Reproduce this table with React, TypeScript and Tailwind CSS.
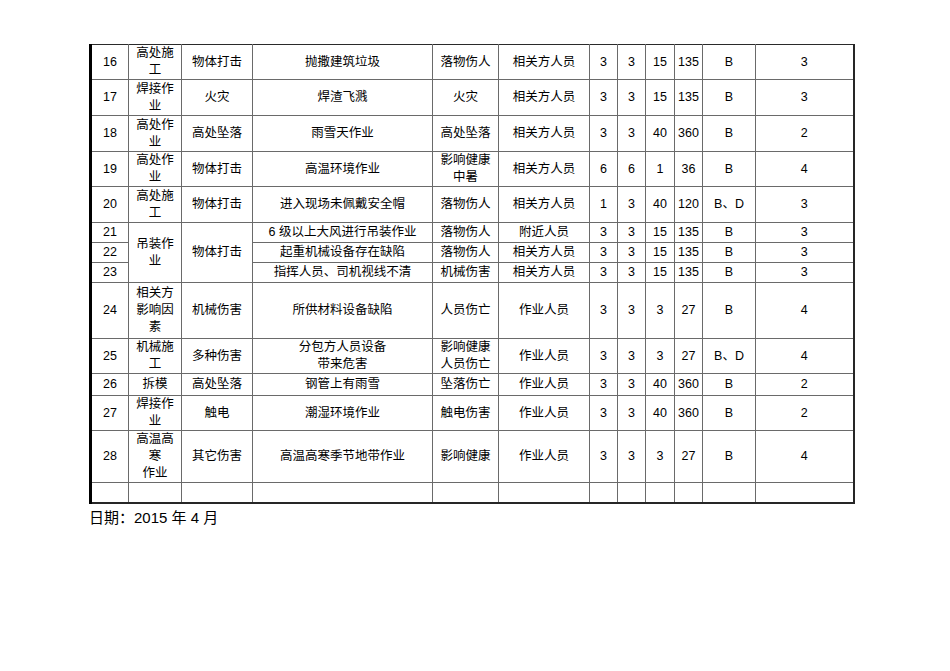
const rows = [
  { no: '16', h: 'h-[35px]', work: '高处施\n工', harm: '物体打击', src: '抛撒建筑垃圾', result: '落物伤人', who: '相关方人员', l: '3', e: '3', c: '15', d: '135', ctrl: 'B', lvl: '3' },
  { no: '17', h: 'h-[36px]', work: '焊接作\n业', harm: '火灾', src: '焊渣飞溅', result: '火灾', who: '相关方人员', l: '3', e: '3', c: '15', d: '135', ctrl: 'B', lvl: '3' },
  { no: '18', h: 'h-[36px]', work: '高处作\n业', harm: '高处坠落', src: '雨雪天作业', result: '高处坠落', who: '相关方人员', l: '3', e: '3', c: '40', d: '360', ctrl: 'B', lvl: '2' },
  { no: '19', h: 'h-[35px]', work: '高处作\n业', harm: '物体打击', src: '高温环境作业', result: '影响健康\n中暑', who: '相关方人员', l: '6', e: '6', c: '1', d: '36', ctrl: 'B', lvl: '4' },
  { no: '20', h: 'h-[36px]', work: '高处施\n工', harm: '物体打击', src: '进入现场未佩戴安全帽', result: '落物伤人', who: '相关方人员', l: '1', e: '3', c: '40', d: '120', ctrl: 'B、D', lvl: '3' },
  { no: '21', h: 'h-[20px]', work: '吊装作\n业', harm: '物体打击', span: 3, src: '6 级以上大风进行吊装作业', result: '落物伤人', who: '附近人员', l: '3', e: '3', c: '15', d: '135', ctrl: 'B', lvl: '3' },
  { no: '22', h: 'h-[20px]', skip: true, src: '起重机械设备存在缺陷', result: '落物伤人', who: '相关方人员', l: '3', e: '3', c: '15', d: '135', ctrl: 'B', lvl: '3' },
  { no: '23', h: 'h-[20px]', skip: true, src: '指挥人员、司机视线不清', result: '机械伤害', who: '相关方人员', l: '3', e: '3', c: '15', d: '135', ctrl: 'B', lvl: '3' },
  { no: '24', h: 'h-[56px]', work: '相关方\n影响因\n素', harm: '机械伤害', src: '所供材料设备缺陷', result: '人员伤亡', who: '作业人员', l: '3', e: '3', c: '3', d: '27', ctrl: 'B', lvl: '4' },
  { no: '25', h: 'h-[34px]', work: '机械施\n工', harm: '多种伤害', src: '分包方人员设备\n带来危害', result: '影响健康\n人员伤亡', who: '作业人员', l: '3', e: '3', c: '3', d: '27', ctrl: 'B、D', lvl: '4' },
  { no: '26', h: 'h-[22px]', work: '拆模', harm: '高处坠落', src: '钢管上有雨雪', result: '坠落伤亡', who: '作业人员', l: '3', e: '3', c: '40', d: '360', ctrl: 'B', lvl: '2' },
  { no: '27', h: 'h-[35px]', work: '焊接作\n业', harm: '触电', src: '潮湿环境作业', result: '触电伤害', who: '作业人员', l: '3', e: '3', c: '40', d: '360', ctrl: 'B', lvl: '2' },
  { no: '28', h: 'h-[52px]', work: '高温高\n寒\n作业', harm: '其它伤害', src: '高温高寒季节地带作业', result: '影响健康', who: '作业人员', l: '3', e: '3', c: '3', d: '27', ctrl: 'B', lvl: '4' },
];

const cell = 'border border-[#6a6a6a] p-0 text-center align-middle whitespace-pre-line';
const first = 'border-l-[3px] border-l-black';
const last = 'border-r-2 border-r-[#262626]';
const bottom = 'border-b-2 border-b-[#262626]';

export default function App() {
  return (
    <div className="w-[950px] h-[671px] bg-white pt-[44px] pl-[89px] text-black font-['Liberation_Sans','Noto_Sans_CJK_SC',sans-serif]">
      <table className="w-[763px] table-fixed border-collapse text-[12.5px] leading-[17px]">
        <colgroup>
          <col className="w-[38px]" />
          <col className="w-[53px]" />
          <col className="w-[71px]" />
          <col className="w-[180px]" />
          <col className="w-[66px]" />
          <col className="w-[91px]" />
          <col className="w-[28px]" />
          <col className="w-[28px]" />
          <col className="w-[29px]" />
          <col className="w-[28px]" />
          <col className="w-[53px]" />
          <col className="w-[98px]" />
        </colgroup>
        <tbody>
          {rows.map((r, i) => {
            const top = i === 0 ? 'border-t-[#2a2a2a]' : '';
            return (
              <tr key={r.no}>
                <td className={`${cell} ${r.h} ${first} ${top}`}>{r.no}</td>
                {!r.skip && <td rowSpan={r.span || 1} className={`${cell} ${top}`}>{r.work}</td>}
                {!r.skip && <td rowSpan={r.span || 1} className={`${cell} ${top}`}>{r.harm}</td>}
                <td className={`${cell} ${top}`}>{r.src}</td>
                <td className={`${cell} ${top}`}>{r.result}</td>
                <td className={`${cell} ${top}`}>{r.who}</td>
                <td className={`${cell} ${top}`}>{r.l}</td>
                <td className={`${cell} ${top}`}>{r.e}</td>
                <td className={`${cell} ${top}`}>{r.c}</td>
                <td className={`${cell} ${top}`}>{r.d}</td>
                <td className={`${cell} ${top}`}>{r.ctrl}</td>
                <td className={`${cell} ${top} ${last}`}>{r.lvl}</td>
              </tr>
            );
          })}
          <tr>
            <td className={`${cell} h-[20px] ${first} ${bottom}`}></td>
            <td className={`${cell} ${bottom}`}></td>
            <td className={`${cell} ${bottom}`}></td>
            <td className={`${cell} ${bottom}`}></td>
            <td className={`${cell} ${bottom}`}></td>
            <td className={`${cell} ${bottom}`}></td>
            <td className={`${cell} ${bottom}`}></td>
            <td className={`${cell} ${bottom}`}></td>
            <td className={`${cell} ${bottom}`}></td>
            <td className={`${cell} ${bottom}`}></td>
            <td className={`${cell} ${bottom}`}></td>
            <td className={`${cell} ${bottom} ${last}`}></td>
          </tr>
        </tbody>
      </table>
      <div className="mt-[4px] text-[15px] leading-[20px]">日期：2015 年 4 月</div>
    </div>
  );
}
